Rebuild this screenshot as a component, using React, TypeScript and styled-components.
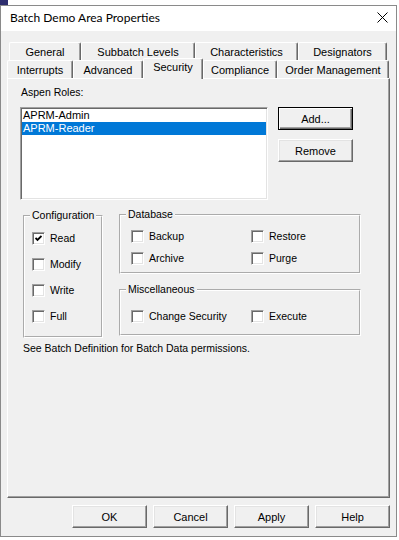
import styled, { createGlobalStyle } from 'styled-components';

const GlobalStyle = createGlobalStyle`
  html, body {
    margin: 0;
    padding: 0;
    background: #ffffff;
  }
  body {
    width: 399px;
    height: 540px;
    overflow: hidden;
    font-family: "Liberation Sans", Arial, sans-serif;
    font-size: 10.5px;
    color: #000000;
  }
`;

const BackdropStrip = styled.div`
  height: 5px;
  background: linear-gradient(90deg, #2e2e6e 0 8px, #ffffff 8px);
`;

const DialogWindow = styled.div`
  width: 397px;
  height: 532px;
  box-sizing: border-box;
  border: 1px solid #8a8a8a;
  display: flex;
  flex-direction: column;
  background: #f0f0f0;
`;

const TitleBar = styled.div`
  flex: none;
  height: 25px;
  box-sizing: border-box;
  padding: 0 8px 2px 9px;
  display: flex;
  align-items: center;
  justify-content: space-between;
  background: #ffffff;
  font-family: Lato, "Noto Sans", sans-serif;
  font-size: 12px;
`;

const DialogBody = styled.div`
  flex: 1;
  display: flex;
  flex-direction: column;
  padding: 11px 6px 8px 6px;
`;

const TabStrip = styled.div`
  position: relative;
  z-index: 1;
  height: 36px;
  display: flex;
  flex-direction: column;
`;

const TabRow = styled.div<{ $indent: number }>`
  display: flex;
  height: 18px;
  padding-left: ${(p) => p.$indent}px;
`;

const Tab = styled.div<{ $width: number; $active?: boolean }>`
  box-sizing: border-box;
  flex: none;
  width: ${(p) => p.$width}px;
  height: ${(p) => (p.$active ? 21 : 18)}px;
  margin-top: ${(p) => (p.$active ? -2 : 0)}px;
  padding-bottom: ${(p) => (p.$active ? 4 : 0)}px;
  display: flex;
  align-items: center;
  justify-content: center;
  background: #f0f0f0;
  border-top: 1px solid #ffffff;
  border-left: 1px solid #ffffff;
  border-right: 1px solid #696969;
  box-shadow: inset -1px 0 0 #a0a0a0;
  border-top-left-radius: 2px;
  border-top-right-radius: 2px;
  font-size: 11px;
  white-space: nowrap;
`;

const TabPage = styled.div`
  box-sizing: border-box;
  height: 420px;
  border: 1px solid;
  border-color: #ffffff #696969 #696969 #ffffff;
  box-shadow: inset -1px -1px 0 #a0a0a0;
  padding: 7px 0 0 12px;
`;

const FieldLabel = styled.div`
  line-height: 13px;
  margin-left: 1px;
`;

const RolesRow = styled.div`
  display: flex;
  gap: 10px;
  margin-top: 8px;
  height: 93px;
`;

const ListBox = styled.div`
  box-sizing: border-box;
  width: 248px;
  height: 93px;
  background: #ffffff;
  border: 1px solid;
  border-color: #a0a0a0 #ffffff #ffffff #a0a0a0;
  box-shadow: inset 1px 1px 0 #696969, inset -1px -1px 0 #e3e3e3;
  padding: 1px 1px 0 1px;
  font-size: 11px;
`;

const ListItem = styled.div<{ $selected?: boolean }>`
  height: 13px;
  line-height: 13px;
  padding-left: 1px;
  background: ${(p) => (p.$selected ? '#0078d7' : 'transparent')};
  color: ${(p) => (p.$selected ? '#ffffff' : '#000000')};
`;

const SideButtons = styled.div`
  display: flex;
  flex-direction: column;
  gap: 9px;
`;

const PushButton = styled.button<{ $default?: boolean }>`
  box-sizing: border-box;
  width: 75px;
  height: 23px;
  padding: 0;
  margin: 0;
  font: inherit;
  font-size: 11px;
  color: #000000;
  background: #f0f0f0;
  border: 1px solid;
  border-color: ${(p) => (p.$default ? '#000000' : '#ffffff #696969 #696969 #ffffff')};
  box-shadow: ${(p) =>
    p.$default
      ? 'inset 1px 1px 0 #ffffff, inset -1px -1px 0 #696969, inset -2px -2px 0 #a0a0a0'
      : 'inset -1px -1px 0 #a0a0a0, inset 1px 1px 0 #e3e3e3'};
`;

const PermRow = styled.div`
  display: flex;
  gap: 16px;
  margin: 8px 0 0 3px;
`;

const SideGroups = styled.div`
  display: flex;
  flex-direction: column;
  gap: 9px;
`;

const GroupBox = styled.fieldset<{ $width: number; $height: number; $top?: number }>`
  box-sizing: border-box;
  margin: ${(p) => p.$top ?? 0}px 0 0 0;
  padding: 0;
  min-inline-size: 0;
  width: ${(p) => p.$width}px;
  height: ${(p) => p.$height}px;
  border: 2px groove #ffffff;
`;

const GroupLegend = styled.legend`
  margin-left: 5px;
  padding: 0 2px;
  line-height: 13px;
`;

const CheckColumn = styled.div`
  display: flex;
  flex-direction: column;
  gap: 13px;
  padding: 10px 0 0 7px;
`;

const CheckGrid = styled.div<{ $top: number }>`
  display: grid;
  grid-template-columns: 120px auto;
  row-gap: 9px;
  padding: ${(p) => p.$top}px 0 0 10px;
`;

const CheckRow = styled.label`
  display: flex;
  align-items: center;
  gap: 5px;
  height: 13px;
  line-height: 13px;
  white-space: nowrap;
`;

const CheckSquare = styled.span`
  box-sizing: border-box;
  flex: none;
  width: 13px;
  height: 13px;
  display: flex;
  align-items: center;
  justify-content: center;
  background: #ffffff;
  border: 1px solid;
  border-color: #a0a0a0 #ffffff #ffffff #a0a0a0;
  box-shadow: inset 1px 1px 0 #696969, inset -1px -1px 0 #e3e3e3;
`;

const Note = styled.div`
  margin: 4px 0 0 3px;
  line-height: 13px;
`;

const ButtonBar = styled.div`
  display: flex;
  justify-content: flex-end;
  gap: 6px;
  margin-top: 7px;
`;

function CloseGlyph() {
  return (
    <svg width="11" height="11" viewBox="0 0 11 11">
      <path d="M0.5 0.5 L10.5 10.5 M10.5 0.5 L0.5 10.5" stroke="#000" strokeWidth="1" />
    </svg>
  );
}

function CheckBox({ label, checked }: { label: string; checked?: boolean }) {
  return (
    <CheckRow>
      <CheckSquare>
        {checked && (
          <svg width="7" height="7" viewBox="0 0 7 7">
            <path d="M0.5 3 L2.5 5 L6.5 1" stroke="#000" strokeWidth="1.8" fill="none" />
          </svg>
        )}
      </CheckSquare>
      {label}
    </CheckRow>
  );
}

export default function App() {
  return (
    <>
      <GlobalStyle />
      <BackdropStrip />
      <DialogWindow>
        <TitleBar>
          <span>Batch Demo Area Properties</span>
          <CloseGlyph />
        </TitleBar>
        <DialogBody>
          <TabStrip>
            <TabRow $indent={2}>
              <Tab $width={72}>General</Tab>
              <Tab $width={114}>Subbatch Levels</Tab>
              <Tab $width={103}>Characteristics</Tab>
              <Tab $width={89}>Designators</Tab>
            </TabRow>
            <TabRow $indent={0}>
              <Tab $width={66}>Interrupts</Tab>
              <Tab $width={70}>Advanced</Tab>
              <Tab $width={60} $active>Security</Tab>
              <Tab $width={74}>Compliance</Tab>
              <Tab $width={112}>Order Management</Tab>
            </TabRow>
          </TabStrip>
          <TabPage>
            <FieldLabel>Aspen Roles:</FieldLabel>
            <RolesRow>
              <ListBox>
                <ListItem>APRM-Admin</ListItem>
                <ListItem $selected>APRM-Reader</ListItem>
              </ListBox>
              <SideButtons>
                <PushButton $default>Add...</PushButton>
                <PushButton>Remove</PushButton>
              </SideButtons>
            </RolesRow>
            <PermRow>
              <GroupBox $width={80} $height={129} $top={1}>
                <GroupLegend>Configuration</GroupLegend>
                <CheckColumn>
                  <CheckBox label="Read" checked />
                  <CheckBox label="Modify" />
                  <CheckBox label="Write" />
                  <CheckBox label="Full" />
                </CheckColumn>
              </GroupBox>
              <SideGroups>
                <GroupBox $width={242} $height={66}>
                  <GroupLegend>Database</GroupLegend>
                  <CheckGrid $top={9}>
                    <CheckBox label="Backup" />
                    <CheckBox label="Restore" />
                    <CheckBox label="Archive" />
                    <CheckBox label="Purge" />
                  </CheckGrid>
                </GroupBox>
                <GroupBox $width={242} $height={53}>
                  <GroupLegend>Miscellaneous</GroupLegend>
                  <CheckGrid $top={14}>
                    <CheckBox label="Change Security" />
                    <CheckBox label="Execute" />
                  </CheckGrid>
                </GroupBox>
              </SideGroups>
            </PermRow>
            <Note>See Batch Definition for Batch Data permissions.</Note>
          </TabPage>
          <ButtonBar>
            <PushButton>OK</PushButton>
            <PushButton>Cancel</PushButton>
            <PushButton>Apply</PushButton>
            <PushButton>Help</PushButton>
          </ButtonBar>
        </DialogBody>
      </DialogWindow>
    </>
  );
}
